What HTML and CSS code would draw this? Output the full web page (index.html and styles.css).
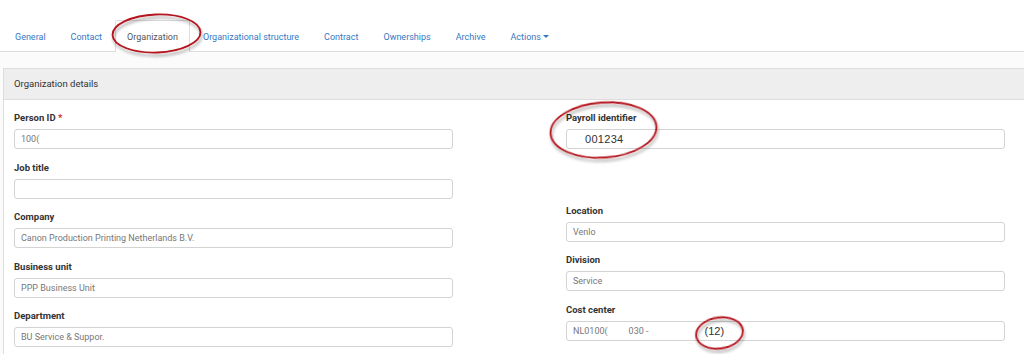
FILE: index.html
```html
<!DOCTYPE html>
<html>
<head>
	<title>Organization</title>
	<link rel="stylesheet" href="styles.css">
</head>
<body>
	<nav class="tabs">
		<a href="#">General</a>
		<a href="#">Contact</a>
		<a href="#" class="active">Organization</a>
		<a href="#">Organizational structure</a>
		<a href="#">Contract</a>
		<a href="#">Ownerships</a>
		<a href="#">Archive</a>
		<a href="#" class="dropdown">Actions<span class="caret"></span></a>
	</nav>

	<div class="content">
		<section class="panel">
			<div class="panel-heading">Organization details</div>
			<div class="panel-body">
				<div class="column">
					<div class="group">
						<label>Person ID <span class="required">*</span></label>
						<div class="input">100(</div>
					</div>
					<div class="group">
						<label>Job title</label>
						<div class="input"></div>
					</div>
					<div class="group">
						<label>Company</label>
						<div class="input">Canon Production Printing Netherlands B.V.</div>
					</div>
					<div class="group">
						<label>Business unit</label>
						<div class="input">PPP Business Unit</div>
					</div>
					<div class="group">
						<label>Department</label>
						<div class="input">BU Service &amp; Suppor.</div>
					</div>
				</div>
				<div class="column">
					<div class="group">
						<label>Payroll identifier</label>
						<div class="input"><span class="big payroll">001234</span></div>
					</div>
					<div class="spacer"></div>
					<div class="group">
						<label>Location</label>
						<div class="input">Venlo</div>
					</div>
					<div class="group">
						<label>Division</label>
						<div class="input">Service</div>
					</div>
					<div class="group">
						<label>Cost center</label>
						<div class="input"><span>NL0100(</span><span class="cc-mid">030 -</span><span class="big cc-num">(12)</span></div>
					</div>
				</div>
			</div>
		</section>
	</div>

	<!-- red markers drawn over the screenshot -->
	<svg class="marks" width="1024" height="354" viewBox="0 0 1024 354">
		<defs>
			<filter id="shade" x="-20%" y="-20%" width="140%" height="160%">
				<feDropShadow dx="1" dy="3" stdDeviation="1.5" flood-color="#000" flood-opacity=".35"/>
			</filter>
		</defs>
		<g fill="none" stroke="#b3141d" stroke-width="1.8" filter="url(#shade)">
			<ellipse cx="156.5" cy="33.5" rx="44" ry="19" transform="rotate(-2 156.5 33.5)"/>
			<ellipse cx="603.5" cy="130" rx="53" ry="27.5" transform="rotate(-4 603.5 130)"/>
			<ellipse cx="719.5" cy="333" rx="23.5" ry="15.5" transform="rotate(-8 719.5 333)"/>
		</g>
	</svg>
</body>
</html>
```

FILE: styles.css
```css
body {
	margin: 0;
	padding: 0;
	font-family: Roboto, "Liberation Sans", sans-serif;
	color: #333;
	background-color: white;
	width: 1024px;
	height: 354px;
	overflow: hidden;
	position: relative;
}
.tabs {
	display: flex;
	padding: 20px 0 0 3px;
	border-bottom: 1px solid #ddd;
	height: 31px;
}
.tabs a {
	display: flex;
	align-items: center;
	padding: 0 11px;
	margin-right: 1px;
	margin-bottom: -1px;
	font-size: 9px;
	color: #3678c2;
	text-decoration: none;
	border: 1px solid transparent;
	border-bottom: 0;
	border-radius: 2px 2px 0 0;
}
.tabs a.active {
	color: #555;
	background-color: white;
	border-color: #ddd;
	height: 32px;
	box-sizing: border-box;
}
.caret {
	display: inline-block;
	margin-left: 2px;
	border-top: 3px solid #3678c2;
	border-left: 3px solid transparent;
	border-right: 3px solid transparent;
}
.content {
	padding: 16px 0 0 3px;
	background-color: #fbfbfb;
}
.panel {
	background-color: white;
	border: 1px solid #ddd;
	border-right: 0;
	border-bottom: 0;
}
.panel-heading {
	height: 30px;
	line-height: 30px;
	padding-left: 10px;
	font-size: 9.5px;
	color: #333;
	background-color: #eee;
	border-bottom: 1px solid #ddd;
}
.panel-body {
	display: grid;
	grid-template-columns: 439px 439px;
	column-gap: 113px;
	padding: 12px 0 7px 10px;
}
.group {
	margin-bottom: 12.5px;
}
.group:last-child {
	margin-bottom: 0;
}
.spacer {
	height: 43px;
}
label {
	display: block;
	font-size: 9.5px;
	font-weight: bold;
	line-height: 12px;
	margin-bottom: 5px;
	color: #333;
}
.required {
	color: #d0281f;
}
.input {
	display: flex;
	align-items: center;
	box-sizing: border-box;
	height: 20px;
	padding: 0 6px;
	font-size: 9px;
	color: #777;
	white-space: nowrap;
	border: 1px solid #d3d3d3;
	border-radius: 3px;
}
.cc-mid {
	margin-left: 21px;
}
.big {
	font-family: "Liberation Sans", Arial, sans-serif;
	font-size: 11px;
	color: #333;
}
.payroll {
	margin-left: 12px;
	letter-spacing: .3px;
}
.cc-num {
	margin-left: 56px;
}
.marks {
	position: absolute;
	top: 0;
	left: 0;
	pointer-events: none;
}
```
